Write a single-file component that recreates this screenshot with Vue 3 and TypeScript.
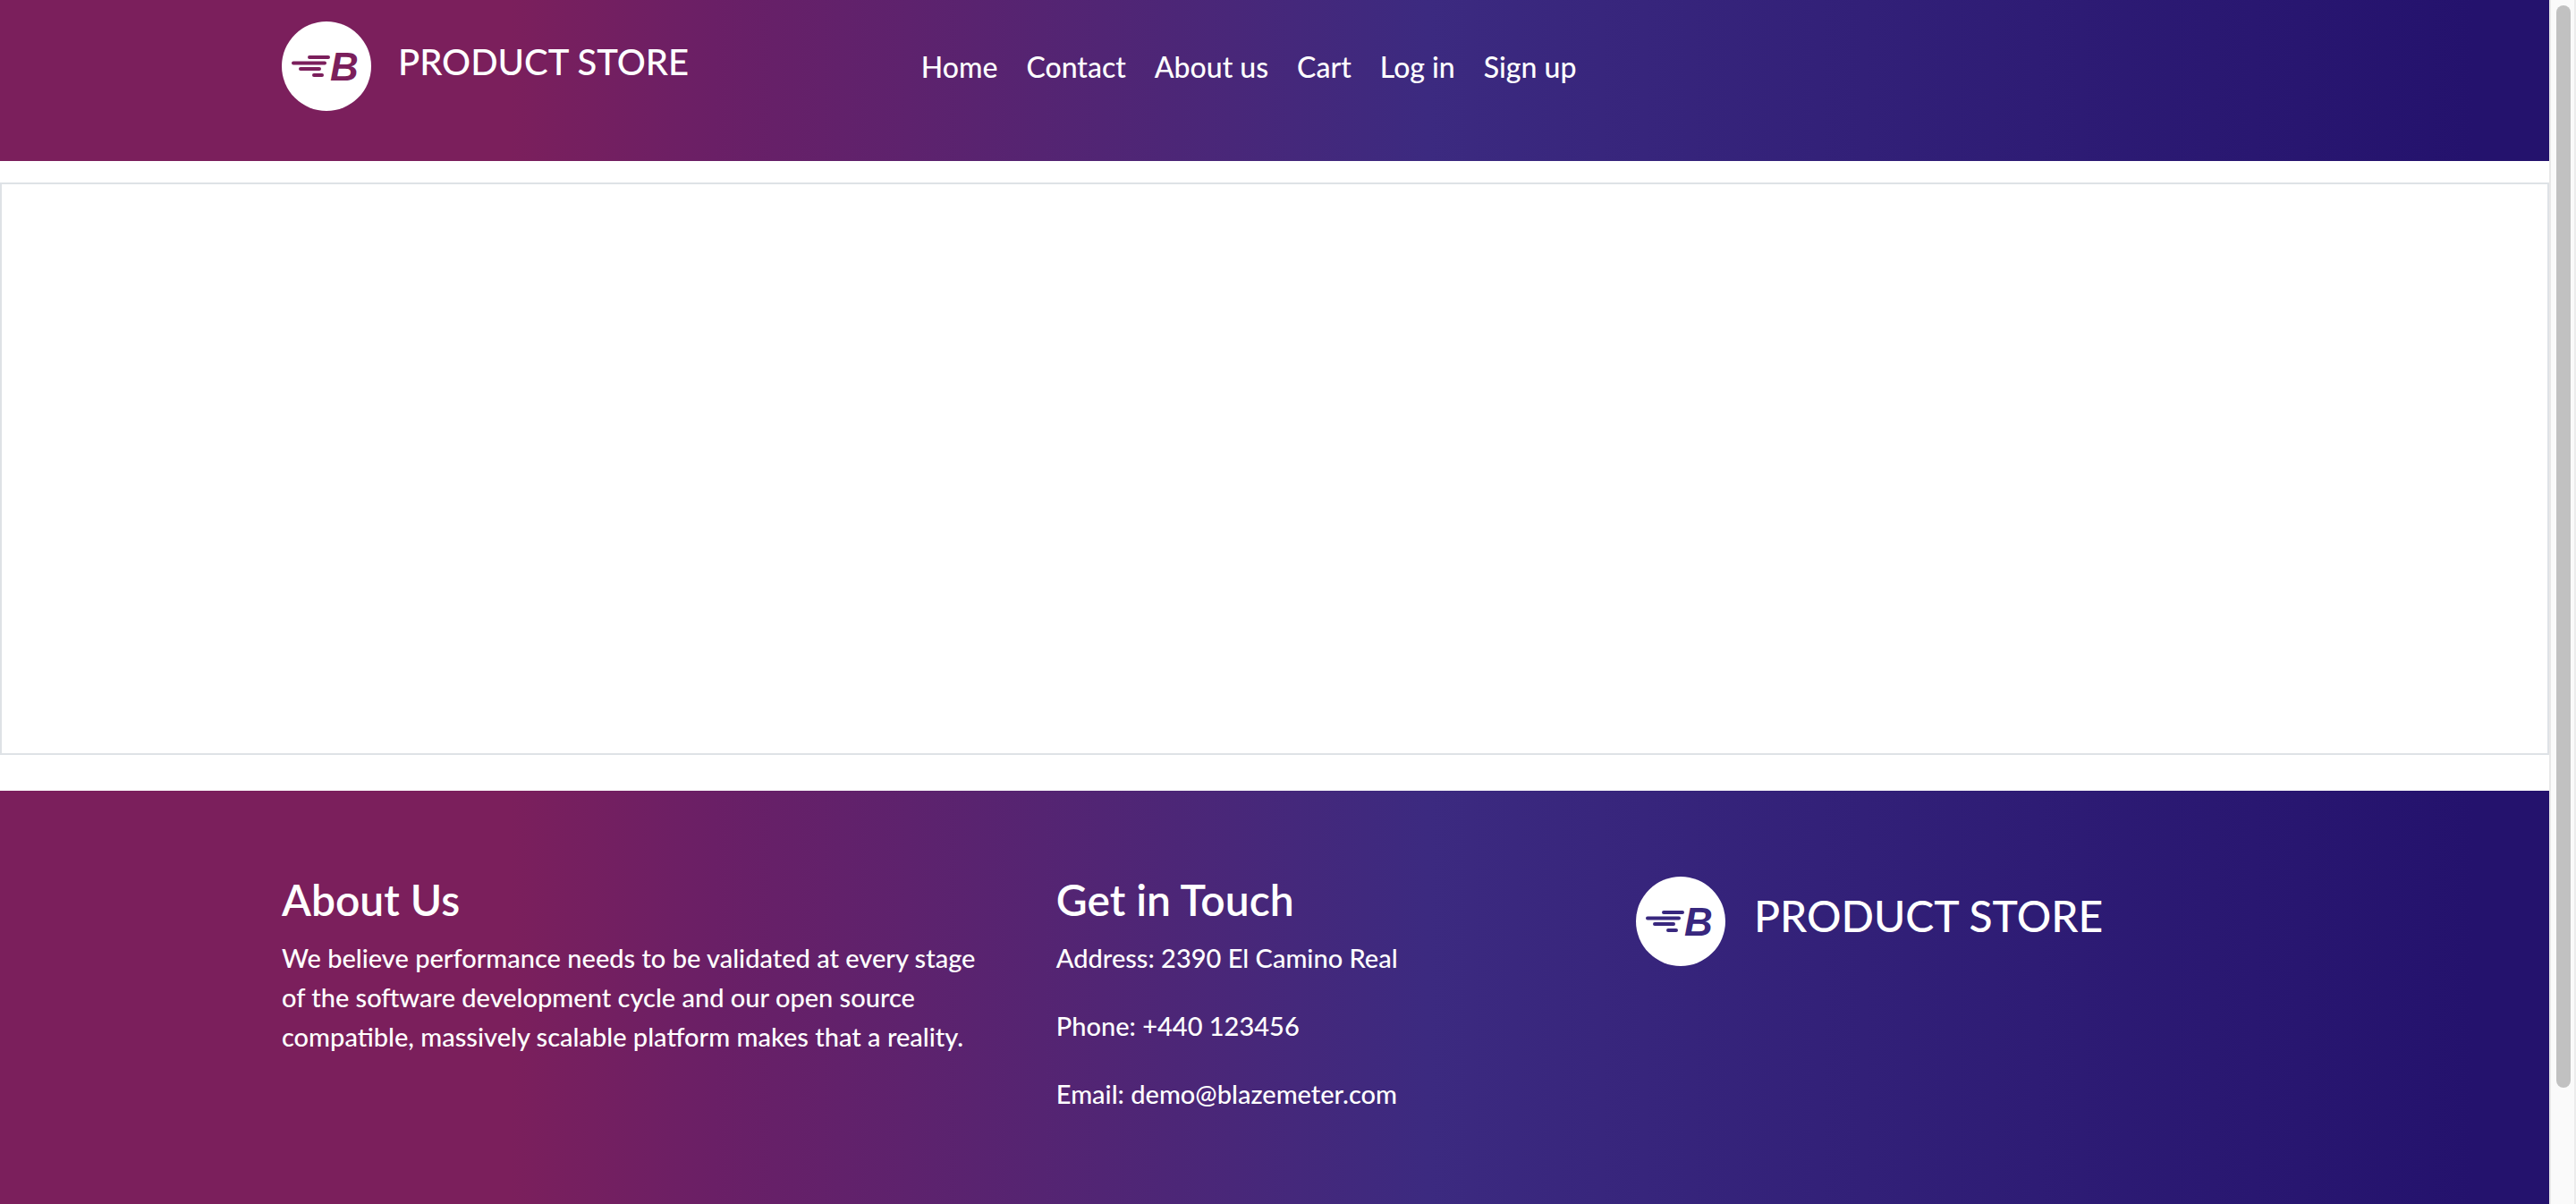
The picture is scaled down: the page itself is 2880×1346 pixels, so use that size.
<script setup lang="ts">
interface NavLink {
  label: string
  href: string
}

const links: NavLink[] = [
  { label: 'Home', href: '#home' },
  { label: 'Contact', href: '#contact' },
  { label: 'About us', href: '#about' },
  { label: 'Cart', href: '#cart' },
  { label: 'Log in', href: '#login' },
  { label: 'Sign up', href: '#signup' },
]

const contacts: string[] = [
  'Address: 2390 El Camino Real',
  'Phone: +440 123456',
  'Email: demo@blazemeter.com',
]
</script>

<template>
  <div class="window">
    <div class="page">
      <header class="band header">
        <nav class="container bar" aria-label="Main">
          <a class="brand" href="#home">
            <svg class="logo" viewBox="0 0 100 100" aria-hidden="true">
              <circle cx="50" cy="50" r="50" fill="#fff" />
              <g stroke="currentColor" stroke-width="4" stroke-linecap="round">
                <path d="M31 40H52M13 46.5H48M21 53H42M36 60H45" />
              </g>
              <text x="54" y="66" class="mark">B</text>
            </svg>
            <span class="brand-name">PRODUCT STORE</span>
          </a>
          <ul class="links">
            <li v-for="link in links" :key="link.label">
              <a :href="link.href">{{ link.label }}</a>
            </li>
          </ul>
        </nav>
      </header>

      <main class="carousel"></main>

      <footer class="band footer">
        <div class="container columns">
          <section>
            <h4>About Us</h4>
            <p>
              We believe performance needs to be validated at every stage of the software
              development cycle and our open source compatible, massively scalable platform
              makes that a reality.
            </p>
          </section>
          <section>
            <h4>Get in Touch</h4>
            <p v-for="line in contacts" :key="line">{{ line }}</p>
          </section>
          <section class="brand large">
            <svg class="logo" viewBox="0 0 100 100" aria-hidden="true">
              <circle cx="50" cy="50" r="50" fill="#fff" />
              <g stroke="currentColor" stroke-width="4" stroke-linecap="round">
                <path d="M31 40H52M13 46.5H48M21 53H42M36 60H45" />
              </g>
              <text x="54" y="66" class="mark">B</text>
            </svg>
            <span class="brand-name">PRODUCT STORE</span>
          </section>
        </div>
      </footer>
    </div>
    <div class="rail" aria-hidden="true"><div class="thumb"></div></div>
  </div>
</template>

<style>
body {
  margin: 0;
  background: #fff;
}
</style>

<style scoped>
.window {
  display: flex;
  min-height: 100vh;
  font-family: Lato, sans-serif;
  font-weight: 500;
  color: #fff;
}

.page {
  flex: 1;
  min-width: 0;
  display: flex;
  flex-direction: column;
}

.band {
  background: linear-gradient(
    90deg,
    #7b1f5c 0%,
    #7b1f5c 20%,
    #6a1f66 28%,
    #3c2a80 56%,
    #24126d 97%,
    #24126d 100%
  );
}

.container {
  box-sizing: border-box;
  width: 80%;
  margin: 0 auto;
  padding: 0 30px;
}

.header {
  height: 180px;
}

.bar {
  display: flex;
  align-items: flex-start;
  padding-top: 24px;
}

.brand {
  display: flex;
  align-items: flex-start;
  gap: 30px;
  color: #fff;
  text-decoration: none;
}

.bar .brand {
  width: 32.2%;
}

.logo {
  flex: none;
  width: 100px;
  height: 100px;
  color: #7b1f5c;
}

.large .logo {
  color: #38277e;
}

.mark {
  font: italic 700 44px 'Liberation Sans', sans-serif;
  fill: currentColor;
}

.brand-name {
  font-size: 40px;
  line-height: 60px;
  padding-top: 15px;
  white-space: nowrap;
}

.brand.large {
  gap: 32px;
  padding-top: 12px;
}

.large .brand-name {
  font-size: 48px;
  line-height: 58px;
}

.links {
  display: flex;
  gap: 32px;
  margin: 0;
  padding: 27px 0 0;
  list-style: none;
  font-size: 32px;
  line-height: 48px;
  white-space: nowrap;
}

.links a {
  color: #fff;
  text-decoration: none;
}

.carousel {
  box-sizing: border-box;
  height: 640px;
  margin: 24px 0 40px;
  border: 2px solid #dee2e6;
}

.footer {
  flex: 1;
  padding: 84px 0;
}

.columns {
  display: grid;
  grid-template-columns: 39% 29.2% 1fr;
}

.columns section {
  padding-right: 60px;
}

h4 {
  margin: 10px 0 15px;
  font-size: 48px;
  line-height: 56px;
  font-weight: 600;
}

p {
  margin: 0 0 32px;
  font-size: 29px;
  line-height: 44px;
}

.rail {
  box-sizing: border-box;
  width: 30px;
  padding: 6px 4px 6px 6px;
  background: #fafafa;
  border-left: 2px solid #e8e8e8;
  border-right: 2px solid #ececec;
}

.thumb {
  width: 16px;
  height: 1210px;
  border-radius: 8px;
  background: #c1c1c1;
}
</style>
